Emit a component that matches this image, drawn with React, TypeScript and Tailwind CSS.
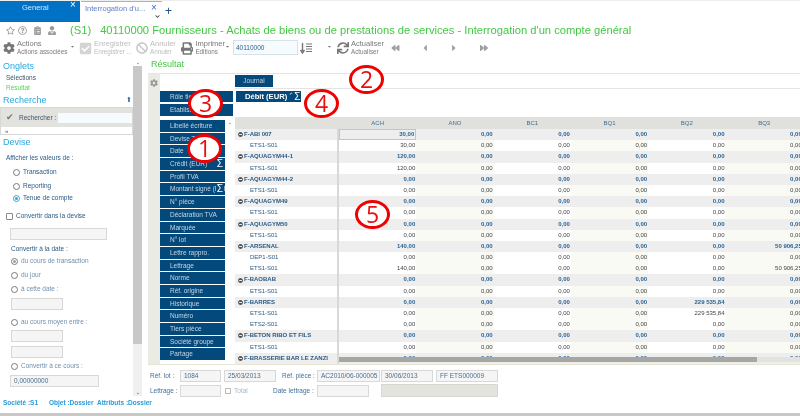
import { ReactNode } from "react";
import {
  FaBackward,
  FaBan,
  FaCaretDown,
  FaCaretLeft,
  FaCaretRight,
  FaCheckSquare,
  FaChevronDown,
  FaChevronUp,
  FaClipboardList,
  FaCog,
  FaForward,
  FaMinusCircle,
  FaPrint,
  FaRegQuestionCircle,
  FaRegStar,
  FaSync,
  FaUserTie,
} from "react-icons/fa";

const columns = ["ACH", "ANO", "BC1", "BQ1", "BQ2", "BQ3"];

type Row = { label: string; group?: boolean; values?: Record<string, string> };

const rows: Row[] = [
  { label: "F-ABI 007", group: true, values: { ACH: "30,00" } },
  { label: "ETS1-S01", values: { ACH: "30,00" } },
  { label: "F-AQUAGYM44-1", group: true, values: { ACH: "120,00" } },
  { label: "ETS1-S01", values: { ACH: "120,00" } },
  { label: "F-AQUAGYM44-2", group: true },
  { label: "ETS1-S01" },
  { label: "F-AQUAGYM49", group: true },
  { label: "ETS1-S01" },
  { label: "F-AQUAGYM50", group: true },
  { label: "ETS1-S01" },
  { label: "F-ARSENAL", group: true, values: { ACH: "140,00", BQ3: "50 906,25" } },
  { label: "DEP1-S01" },
  { label: "ETS1-S01", values: { ACH: "140,00", BQ3: "50 906,25" } },
  { label: "F-BAOBAB", group: true },
  { label: "ETS1-S01" },
  { label: "F-BARRES", group: true, values: { BQ2: "229 535,84" } },
  { label: "ETS1-S01", values: { BQ2: "229 535,84" } },
  { label: "ETS2-S01" },
  { label: "F-BETON RIBO ET FILS", group: true },
  { label: "ETS1-S01" },
  { label: "F-BRASSERIE BAR LE ZANZI", group: true },
];

const fields = [
  "Libellé écriture",
  "Devise TVA",
  "Date",
  "Crédit (EUR)",
  "Profil TVA",
  "Montant signé (EUR)",
  "N° pièce",
  "Déclaration TVA",
  "Marquée",
  "N° lot",
  "Lettre rappro.",
  "Lettrage",
  "Norme",
  "Réf. origine",
  "Historique",
  "Numéro",
  "Tiers pièce",
  "Société groupe",
  "Partage",
];

const Radio = ({ label, checked, off, className }: { label: string; checked?: boolean; off?: boolean; className: string }) => (
  <div className={`flex items-center gap-[3px] h-[10px] shrink-0 ${className}`}>
    <span className={`w-[7px] h-[7px] rounded-full border flex items-center justify-center bg-white ${checked && !off ? "border-[#37a3d8]" : "border-[#7a7a7a]"}`}>
      {checked && <span className={`w-[3px] h-[3px] rounded-full ${off ? "bg-[#a0a0a0]" : "bg-[#37a3d8]"}`}></span>}
    </span>
    <span className={`text-[6.5px] ${off ? "text-[#6f90ae]" : "text-[#2a5a85]"}`}>{label}</span>
  </div>
);

const Box = ({ className, children }: { className: string; children?: ReactNode }) => (
  <div className={`border border-[#d8d8d8] bg-[#f5f5f5] text-[6.5px] text-[#4a6e8e] flex items-center px-[3px] ${className}`}>{children}</div>
);

const ToolItem = ({ icon, title, sub, off, className }: { icon: ReactNode; title: string; sub: string; off?: boolean; className: string }) => (
  <div className={`flex items-center gap-[2px] ${className}`}>
    {icon}
    <div className={`flex flex-col leading-[8px] ${off ? "text-[#bcbcbc]" : "text-[#7a7a7a]"}`}>
      <span className="text-[7.5px]">{title}</span>
      <span className="text-[6.3px]">{sub}</span>
    </div>
  </div>
);

const Ring = ({ n, className }: { n: number; className: string }) => (
  <div className={`absolute w-[35px] h-[29px] rounded-[50%] border-[3.5px] border-[#f00000] bg-white flex items-center justify-center text-[#e81010] text-[23px] leading-none font-['Open_Sans',sans-serif] ${className}`}>
    {n}
  </div>
);

const FieldButton = ({ label, sigma }: { label: string; sigma?: boolean }) => (
  <div className="relative h-[11.7px] mb-px bg-[#04497c] text-[#c6d5e3] text-[6.5px] leading-[11.7px] pl-[10px] whitespace-nowrap overflow-hidden">
    {label}
    {sigma && <span className="absolute right-[1px] top-0 px-[1px] bg-[#04497c] text-white text-[10px] leading-[11px]">Σ</span>}
  </div>
);

const App = () => {
  return (
    <div className="relative w-[800px] h-[416px] overflow-hidden bg-white font-['Liberation_Sans',Arial,sans-serif] blur-[0.25px]">
      {/* tabs */}
      <div className="flex h-[22px] bg-white border-t border-[#eeeeee]">
        <div className="relative w-[80px] bg-[#0072c6] text-[#d2e6f5] text-[7.5px] leading-[13px] pl-[22px]">
          General
          <span className="absolute left-[70px] top-[-1px] text-white text-[10px] leading-[10px]">×</span>
        </div>
        <div className="relative w-[81px] ml-px border-t border-[#f0a060] text-[#5f7fc2] text-[7.5px] leading-[14px] pl-[4px] whitespace-nowrap">
          Interrogation d'u...
          <span className="absolute left-[70px] top-[1px] text-[#3f70bc] text-[10px] leading-[10px]">×</span>
          <FaChevronDown className="absolute left-[74px] top-[12px] w-[5px] h-[5px] text-[#333333]" />
        </div>
        <span className="ml-[3px] text-[#1c4e80] text-[12px] leading-[20px]">+</span>
      </div>
      {/* title */}
      <div className="flex items-center h-[16px] pl-[6px] text-[#9a9a9a]">
        <FaRegStar className="w-[9px] h-[9px]" />
        <FaRegQuestionCircle className="w-[9px] h-[9px] ml-[3px]" />
        <FaClipboardList className="w-[7px] h-[9px] ml-[7px]" />
        <FaUserTie className="w-[8px] h-[9px] ml-[7px]" />
        <span className="ml-[14px] text-[#43c943] text-[11.2px] whitespace-nowrap">(S1)</span>
        <span className="ml-[9px] text-[#43c943] text-[11.2px] whitespace-nowrap">
          40110000 Fournisseurs - Achats de biens ou de prestations de services - Interrogation d'un compte général
        </span>
      </div>
      {/* toolbar */}
      <div className="flex items-center h-[20px] pl-[3px]">
        <ToolItem icon={<FaCog className="w-[12px] h-[12px] text-[#777777]" />} title="Actions" sub="Actions associées" className="w-[67px]" />
        <FaCaretDown className="w-[5px] h-[5px] text-[#777777] mb-[3px]" />
        <ToolItem icon={<FaCheckSquare className="w-[13px] h-[13px] text-[#d4d4d4]" />} title="Enregistrer" sub="Enregistrer ..." off className="ml-[4px] w-[57px]" />
        <ToolItem icon={<FaBan className="w-[12px] h-[12px] text-[#c8c8c8]" />} title="Annuler" sub="Annuler" off className="w-[45px]" />
        <ToolItem icon={<FaPrint className="w-[13px] h-[13px] text-[#777777]" />} title="Imprimer" sub="Editions" className="w-[44px]" />
        <FaCaretDown className="w-[5px] h-[5px] text-[#777777] mb-[3px]" />
        <div className="ml-[3px] mb-[2px] w-[65px] h-[15px] border border-[#d5e3ea] bg-[#f6fcfe] text-[#2f6390] text-[6.5px] leading-[13px] pl-[2px]">40110000</div>
        <svg viewBox="0 0 12 12" className="ml-[2px] w-[12px] h-[12px] text-[#777777]" fill="none" stroke="currentColor">
          <path d="M2.5 1v9M.5 8l2 3 2-3" strokeWidth="1.4" />
          <path d="M6 2h6M6 4.5h6M6 7h6M6 9.5h6" strokeWidth="1" />
        </svg>
        <FaCaretDown className="ml-[15px] w-[5px] h-[5px] text-[#777777] mb-[3px]" />
        <ToolItem icon={<FaSync className="w-[12px] h-[12px] text-[#777777]" />} title="Actualiser" sub="Actualiser" className="ml-[5px] w-[52px]" />
        <FaBackward className="w-[11px] h-[8px] text-[#a0a0a0] ml-px" />
        <FaCaretLeft className="w-[8px] h-[10px] text-[#a0a0a0] ml-[20px]" />
        <FaCaretRight className="w-[8px] h-[10px] text-[#a0a0a0] ml-[21px]" />
        <FaForward className="w-[10px] h-[8px] text-[#a0a0a0] ml-[21px]" />
      </div>
      <div className="flex h-[354px] mt-[2px]">
        {/* left panel */}
        <div className="w-[133px] relative pl-[3px] flex flex-col">
          <div className="text-[9px] leading-[10px] text-[#29a9e0] mt-[1px]">Onglets</div>
          <div className="text-[6.5px] leading-[10px] text-[#3e556b] ml-[3px] mt-[2px]">Sélections</div>
          <div className="text-[6.5px] leading-[10px] text-[#5fd05f] ml-[3px]">Résultat</div>
          <div className="flex justify-between items-center text-[9px] leading-[10px] text-[#29a9e0] mt-[2px]">
            Recherche
            <span className="text-[#2f6fa8] text-[7px] mr-[1px]">⬆</span>
          </div>
          <div className="-ml-[3px] mt-[2px] h-[28px] border border-[#d8d8d8] w-[133px] shrink-0">
            <div className="h-[19px] bg-[#e2e2de] flex items-center pl-[5px]">
              <span className="text-[#777777] text-[9px] leading-none">✔</span>
              <span className="ml-[5px] text-[6.5px] text-[#3e556b] whitespace-nowrap">Rechercher :</span>
              <div className="ml-[2px] flex-1 h-[10px] bg-[#f6fcfe]"></div>
            </div>
            <div className="text-[6px] leading-[8px] pl-[4px] text-[#3e556b]">»</div>
          </div>
          <div className="text-[9px] leading-[10px] text-[#29a9e0] mt-[2px]">Devise</div>
          <div className="text-[6.5px] leading-[10px] text-[#2a5a85] ml-[3px] mt-[6px]">Afficher les valeurs de :</div>
          <Radio label="Transaction" className="ml-[10px] mt-[4px]" />
          <Radio label="Reporting" className="ml-[10px] mt-[4px]" />
          <Radio label="Tenue de compte" checked className="ml-[10px] mt-[2px]" />
          <div className="flex items-center gap-[3px] ml-[3px] mt-[8px] h-[10px] shrink-0">
            <span className="w-[7px] h-[7px] border border-[#888888] rounded-[1px]"></span>
            <span className="text-[6.5px] text-[#2a5a85]">Convertir dans la devise</span>
          </div>
          <Box className="ml-[7px] w-[97px] h-[12px] mt-[7px] shrink-0" />
          <div className="text-[6.5px] leading-[10px] text-[#2a5a85] ml-[8px] mt-[4px]">Convertir à la date :</div>
          <Radio label="du cours de transaction" checked off className="ml-[8px] mt-[2px]" />
          <Radio label="du jour" off className="ml-[8px] mt-[4px]" />
          <Radio label="à cette date :" off className="ml-[8px] mt-[4px]" />
          <Box className="ml-[8px] w-[52px] h-[12px] mt-[4px] shrink-0" />
          <Radio label="au cours moyen entre :" off className="ml-[8px] mt-[7px]" />
          <Box className="ml-[8px] w-[52px] h-[12px] mt-[3px] shrink-0" />
          <Box className="ml-[8px] w-[52px] h-[12px] mt-[4px] shrink-0" />
          <Radio label="Convertir à ce cours :" off className="ml-[8px] mt-[3px]" />
          <Box className="ml-[7px] w-[89px] h-[12px] mt-[4px] shrink-0">0,00000000</Box>
          <div className="flex whitespace-nowrap text-[6.5px] font-bold text-[#2b9ad6] mt-[11px]">
            <span className="w-[46px] shrink-0">Société :S1</span>
            <span className="w-[48px] shrink-0">Objet :Dossier</span>
            <span className="shrink-0">Attributs :Dossier</span>
          </div>
        </div>
        {/* left scrollbar */}
        <div className="w-[9px] h-[336px] bg-[#f0f0f0] flex flex-col items-center">
          <div className="h-[6px] w-full bg-white flex items-center justify-center">
            <FaChevronUp className="w-[4px] h-[3px] text-[#666666]" />
          </div>
          <div className="h-[278px] w-full bg-[#c8c8c8]"></div>
          <div className="flex-1"></div>
          <FaChevronDown className="w-[4px] h-[3px] text-[#666666] mb-[1px]" />
        </div>
        <div className="w-[6px]"></div>
        {/* main */}
        <div className="flex-1 min-w-0 flex flex-col">
          <div className="h-[13px] pl-[3px] text-[9px] leading-[7px] pt-px text-[#43c943]">Résultat</div>
          <div className="flex h-[292px] border-t border-[#e6e6d4] border-b">
            <div className="w-[12px] bg-[#ebebe5] flex justify-center pt-[5px]">
              <FaCog className="w-[8px] h-[8px] text-[#999999]" />
            </div>
            <div className="flex-1 min-w-0 flex flex-col">
              <div className="h-[15px] ml-[75px] border-b border-[#e4e4e4] pb-[2px] pt-px -mr-px">
                <div className="w-[38px] h-[12px] bg-[#04497c] text-[#c6d5e3] text-[6.5px] leading-[12px] text-center">Journal</div>
              </div>
              <div className="flex h-[28px] pt-px">
                <div className="w-[73px] mt-px flex flex-col gap-[1.5px]">
                  <div className="h-[11px] bg-[#04497c] text-[#c6d5e3] text-[6.5px] leading-[11px] pl-[10px]">Rôle tiers</div>
                  <div className="h-[12px] bg-[#04497c] text-[#c6d5e3] text-[6.5px] leading-[12px] pl-[10px]">Etablissement</div>
                </div>
                <div className="ml-[3px] mt-px w-[65px] h-[11px] bg-[#04497c] text-white text-[7.6px] font-bold leading-[11px] pl-[9px] whitespace-nowrap flex items-center gap-px">
                  Débit (EUR)
                  <span className="font-normal text-[5px] leading-[6px] self-start ml-px">⁴⁺</span>
                  <span className="font-normal text-[10px] leading-[11px]">Σ</span>
                </div>
              </div>
              <div className="flex flex-1 min-h-0">
                <div className="w-[65px] mt-[3px] shrink-0">
                  {fields.map((f) => (
                    <FieldButton key={f} label={f} sigma={f === "Crédit (EUR)" || f === "Montant signé (EUR)"} />
                  ))}
                </div>
                <div className="w-[10px] flex justify-center pt-[5px] shrink-0">
                  <FaChevronUp className="w-[4px] h-[3px] text-[#666666]" />
                </div>
                <div className="relative flex-1 min-w-0 overflow-hidden">
                  <div className="flex h-[12px] bg-[#e0e0dc] text-[#3f6f9a] text-[6px] leading-[12px]">
                    <div className="w-[104px] shrink-0"></div>
                    {columns.map((c) => (
                      <div key={c} className="w-[77.3px] shrink-0 text-center">{c}</div>
                    ))}
                  </div>
                  {rows.map((r, i) => (
                    <div key={i} className={`flex h-[11.2px] text-[6px] leading-[11.2px] ${r.group ? "bg-[#eeeeef]" : "bg-white"}`}>
                      <div className={`w-[104px] shrink-0 flex items-center border-r-2 border-[#d8d8d8] whitespace-nowrap overflow-hidden text-[#2a5a85] ${r.group ? "pl-[3px] font-bold" : "pl-[15px]"}`}>
                        {r.group && <FaMinusCircle className="w-[5px] h-[5px] text-[#555555] mr-px shrink-0" />}
                        {r.label}
                      </div>
                      {columns.map((c, ci) => (
                        <div
                          key={c}
                          className={`w-[77.3px] shrink-0 text-right pr-[1px] ${r.group ? "font-bold text-[#2a6494]" : "text-[#444444]"} ${!r.group && ci % 2 === 1 ? "bg-[#f8faf3]" : ""} ${i === 0 && ci === 0 ? "border border-[#c4c4c4] leading-[9.2px]" : ""}`}
                        >
                          {r.values?.[c] ?? "0,00"}
                        </div>
                      ))}
                    </div>
                  ))}
                  <div className="absolute left-[104px] right-0 top-[240px] h-[5px] bg-[#e2e2de]">
                    <div className="w-[418px] h-full bg-[#a6a6a2]"></div>
                  </div>
                </div>
              </div>
            </div>
          </div>
          {/* form below the grid */}
          <div className="pl-[2px] pt-[5px] text-[6.5px] text-[#3f6f9a]">
            <div className="flex items-center h-[12px]">
              <span className="w-[30px]">Réf. lot :</span>
              <Box className="w-[41px] h-[12px]">1084</Box>
              <Box className="ml-[3px] w-[52px] h-[12px]">25/03/2013</Box>
              <span className="ml-[6px] w-[35px] whitespace-nowrap">Réf. pièce :</span>
              <Box className="w-[63px] h-[12px] whitespace-nowrap">AC2010/06-000005</Box>
              <Box className="ml-px w-[52px] h-[12px]">30/06/2013</Box>
              <Box className="ml-[3px] w-[62px] h-[12px]">FF ETS000009</Box>
            </div>
            <div className="flex items-center h-[13px] mt-[2px]">
              <span className="w-[30px]">Lettrage :</span>
              <Box className="w-[41px] h-[12px]" />
              <span className="ml-[4px] w-[6px] h-[6px] border border-[#bbbbbb]"></span>
              <span className="ml-[3px] w-[39px] text-[#a5b8c8]">Total</span>
              <span className="w-[44px] whitespace-nowrap">Date lettrage :</span>
              <Box className="w-[52px] h-[12px]" />
              <div className="ml-[12px] w-[117px] h-[13px] bg-[#e4e4de] border border-[#d8d8d2]"></div>
            </div>
          </div>
        </div>
      </div>
      <div className="absolute left-0 right-0 bottom-0 h-[3px] bg-[#c8c8c8]"></div>
      {/* numbered callouts drawn over the capture */}
      <Ring n={1} className="left-[187px] top-[134px]" />
      <Ring n={2} className="left-[349px] top-[65px]" />
      <Ring n={3} className="left-[188px] top-[89px]" />
      <Ring n={4} className="left-[304px] top-[89px]" />
      <Ring n={5} className="left-[355px] top-[200px]" />
    </div>
  );
};

export default App;
